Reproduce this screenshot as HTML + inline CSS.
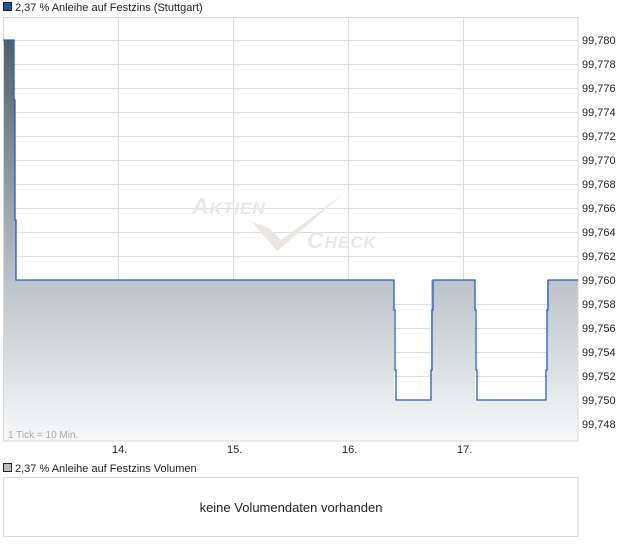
<!DOCTYPE html>
<html><head><meta charset="utf-8"><style>
html,body{margin:0;padding:0;background:#fff;}
svg{display:block;font-family:"Liberation Sans",Arial,sans-serif;}
</style></head><body>
<svg width="620" height="546" viewBox="0 0 620 546" xmlns="http://www.w3.org/2000/svg">
<defs>
<linearGradient id="g" gradientUnits="userSpaceOnUse" x1="0" y1="40" x2="0" y2="441">
<stop offset="0" stop-color="#4d606c"/>
<stop offset="0.6" stop-color="#bcc3c8"/>
<stop offset="1" stop-color="#f7f8f9"/>
</linearGradient>
</defs>
<rect x="3.5" y="2.5" width="8" height="8" fill="#1f4fa8" stroke="#222" stroke-width="1"/>
<text x="15" y="11" font-size="11" fill="#222">2,37 % Anleihe auf Festzins (Stuttgart)</text>
<g stroke="#dcdcdc" stroke-width="1">
<line x1="3" y1="40.5" x2="578" y2="40.5"/><line x1="3" y1="64.5" x2="578" y2="64.5"/><line x1="3" y1="88.5" x2="578" y2="88.5"/><line x1="3" y1="112.5" x2="578" y2="112.5"/><line x1="3" y1="136.5" x2="578" y2="136.5"/><line x1="3" y1="160.5" x2="578" y2="160.5"/><line x1="3" y1="184.5" x2="578" y2="184.5"/><line x1="3" y1="208.5" x2="578" y2="208.5"/><line x1="3" y1="232.5" x2="578" y2="232.5"/><line x1="3" y1="256.5" x2="578" y2="256.5"/>
<line x1="3" y1="304.5" x2="578" y2="304.5"/><line x1="3" y1="328.5" x2="578" y2="328.5"/><line x1="3" y1="352.5" x2="578" y2="352.5"/><line x1="3" y1="376.5" x2="578" y2="376.5"/>
<line x1="118.5" y1="17" x2="118.5" y2="441"/><line x1="233.5" y1="17" x2="233.5" y2="441"/><line x1="348.5" y1="17" x2="348.5" y2="441"/><line x1="463.5" y1="17" x2="463.5" y2="441"/>
</g>
<path d="M3 40 L14 40 L14 100 L15 100 L15 220 L16 220 L16 280 L394 280 L394 400 L431 400 L431 280 L475 280 L475 400 L547 400 L547 280 L578 280 L578 441 L3 441 Z" fill="url(#g)"/>
<g fill="#ebe6e1" font-style="italic" font-weight="bold">
<text x="192" y="214" font-size="23" letter-spacing="1">A<tspan font-size="17">KTIEN</tspan></text>
<text x="307" y="248" font-size="23" letter-spacing="1">C<tspan font-size="17">HECK</tspan></text>
<polygon points="252,222 269,228 281,240 342,195 290,240 277,251" />
</g>
<rect x="3.5" y="17.5" width="574.5" height="423.5" fill="none" stroke="#d8d8d8"/>
<path d="M3 40 L14 40 L14 100 L15 100 L15 220 L16 220 L16 280 L394 280 L394 310 L395 310 L395 370 L396 370 L396 400 L431 400 L431 370 L432 370 L432 310 L433 310 L433 280 L475 280 L475 310 L476 310 L476 370 L477 370 L477 400 L546 400 L546 370 L547 370 L547 310 L548 310 L548 280 L578 280" fill="none" stroke="#1f5fc8" stroke-width="1.3"/>
<text x="8" y="438" font-size="10" fill="#aaa">1 Tick = 10 Min.</text>
<g font-size="11" fill="#222">
<text x="582" y="44">99,780</text><text x="582" y="68">99,778</text><text x="582" y="92">99,776</text><text x="582" y="116">99,774</text><text x="582" y="140">99,772</text><text x="582" y="164">99,770</text><text x="582" y="188">99,768</text><text x="582" y="212">99,766</text><text x="582" y="236">99,764</text><text x="582" y="260">99,762</text><text x="582" y="284">99,760</text><text x="582" y="308">99,758</text><text x="582" y="332">99,756</text><text x="582" y="356">99,754</text><text x="582" y="380">99,752</text><text x="582" y="404">99,750</text><text x="582" y="428">99,748</text>
</g>
<g font-size="11" fill="#222">
<text x="112" y="453">14.</text><text x="227" y="453">15.</text><text x="342" y="453">16.</text><text x="457" y="453">17.</text>
</g>
<rect x="3.5" y="463.5" width="8" height="8" fill="#bbb" stroke="#222"/>
<text x="15" y="472" font-size="11" fill="#222">2,37 % Anleihe auf Festzins Volumen</text>
<rect x="3.5" y="477.5" width="574.5" height="59" fill="#fff" stroke="#d8d8d8"/>
<text x="291" y="512" font-size="13" fill="#222" text-anchor="middle">keine Volumendaten vorhanden</text>
</svg>
</body></html>
